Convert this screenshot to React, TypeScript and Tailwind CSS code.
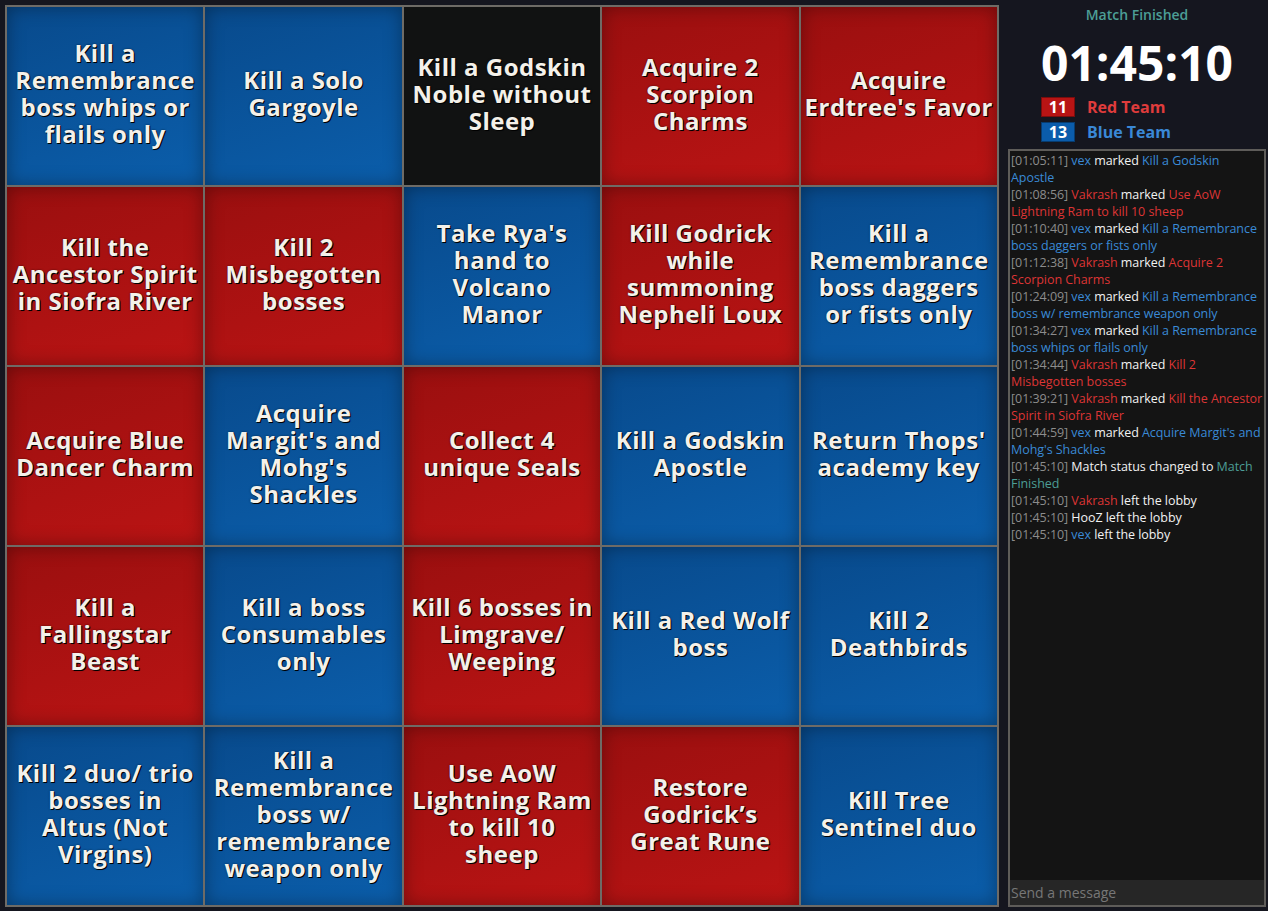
import React from "react";

type Team = "red" | "blue" | "none";

interface Goal {
  lines: string[];
  team: Team;
}

const goals: Goal[] = [
  { lines: ["Kill a", "Remembrance", "boss whips or", "flails only"], team: "blue" },
  { lines: ["Kill a Solo", "Gargoyle"], team: "blue" },
  { lines: ["Kill a Godskin", "Noble without", "Sleep"], team: "none" },
  { lines: ["Acquire 2", "Scorpion", "Charms"], team: "red" },
  { lines: ["Acquire", "Erdtree's Favor"], team: "red" },

  { lines: ["Kill the", "Ancestor Spirit", "in Siofra River"], team: "red" },
  { lines: ["Kill 2", "Misbegotten", "bosses"], team: "red" },
  { lines: ["Take Rya's", "hand to", "Volcano", "Manor"], team: "blue" },
  { lines: ["Kill Godrick", "while", "summoning", "Nepheli Loux"], team: "red" },
  { lines: ["Kill a", "Remembrance", "boss daggers", "or fists only"], team: "blue" },

  { lines: ["Acquire Blue", "Dancer Charm"], team: "red" },
  { lines: ["Acquire", "Margit's and", "Mohg's", "Shackles"], team: "blue" },
  { lines: ["Collect 4", "unique Seals"], team: "red" },
  { lines: ["Kill a Godskin", "Apostle"], team: "blue" },
  { lines: ["Return Thops'", "academy key"], team: "blue" },

  { lines: ["Kill a", "Fallingstar", "Beast"], team: "red" },
  { lines: ["Kill a boss", "Consumables", "only"], team: "blue" },
  { lines: ["Kill 6 bosses in", "Limgrave/", "Weeping"], team: "red" },
  { lines: ["Kill a Red Wolf", "boss"], team: "blue" },
  { lines: ["Kill 2", "Deathbirds"], team: "blue" },

  { lines: ["Kill 2 duo/ trio", "bosses in", "Altus (Not", "Virgins)"], team: "blue" },
  { lines: ["Kill a", "Remembrance", "boss w/", "remembrance", "weapon only"], team: "blue" },
  { lines: ["Use AoW", "Lightning Ram", "to kill 10", "sheep"], team: "red" },
  { lines: ["Restore", "Godrick\u2019s", "Great Rune"], team: "red" },
  { lines: ["Kill Tree", "Sentinel duo"], team: "blue" },
];

const cellTone: Record<Team, string> = {
  blue: "bg-[linear-gradient(160deg,#084a8c,#0b5eab)] shadow-[inset_0_0_18px_rgba(0,0,0,0.35)]",
  red: "bg-[linear-gradient(160deg,#9a0f0f,#bb1414)] shadow-[inset_0_0_18px_rgba(0,0,0,0.35)]",
  none: "bg-[#111212]",
};

type Seg = { text: string; c: "ts" | "w" | "b" | "r" | "t" };

const segColor = {
  ts: "text-[#8c8c8c]",
  w: "text-[#f2f2f2]",
  b: "text-[#3a8ad6]",
  r: "text-[#dd3535]",
  t: "text-[#4c9e96]",
};

const log: Seg[][] = [
  [{ text: "[01:05:11] ", c: "ts" }, { text: "vex", c: "b" }, { text: " marked ", c: "w" }, { text: "Kill a Godskin Apostle", c: "b" }],
  [{ text: "[01:08:56] ", c: "ts" }, { text: "Vakrash", c: "r" }, { text: " marked ", c: "w" }, { text: "Use AoW Lightning Ram to kill 10 sheep", c: "r" }],
  [{ text: "[01:10:40] ", c: "ts" }, { text: "vex", c: "b" }, { text: " marked ", c: "w" }, { text: "Kill a Remembrance boss daggers or fists only", c: "b" }],
  [{ text: "[01:12:38] ", c: "ts" }, { text: "Vakrash", c: "r" }, { text: " marked ", c: "w" }, { text: "Acquire 2 Scorpion Charms", c: "r" }],
  [{ text: "[01:24:09] ", c: "ts" }, { text: "vex", c: "b" }, { text: " marked ", c: "w" }, { text: "Kill a Remembrance boss w/ remembrance weapon only", c: "b" }],
  [{ text: "[01:34:27] ", c: "ts" }, { text: "vex", c: "b" }, { text: " marked ", c: "w" }, { text: "Kill a Remembrance boss whips or flails only", c: "b" }],
  [{ text: "[01:34:44] ", c: "ts" }, { text: "Vakrash", c: "r" }, { text: " marked ", c: "w" }, { text: "Kill 2 Misbegotten bosses", c: "r" }],
  [{ text: "[01:39:21] ", c: "ts" }, { text: "Vakrash", c: "r" }, { text: " marked ", c: "w" }, { text: "Kill the Ancestor Spirit in Siofra River", c: "r" }],
  [{ text: "[01:44:59] ", c: "ts" }, { text: "vex", c: "b" }, { text: " marked ", c: "w" }, { text: "Acquire Margit's and Mohg's Shackles", c: "b" }],
  [{ text: "[01:45:10] ", c: "ts" }, { text: "Match status changed to ", c: "w" }, { text: "Match Finished", c: "t" }],
  [{ text: "[01:45:10] ", c: "ts" }, { text: "Vakrash", c: "r" }, { text: " left the lobby", c: "w" }],
  [{ text: "[01:45:10] ", c: "ts" }, { text: "HooZ left the lobby", c: "w" }],
  [{ text: "[01:45:10] ", c: "ts" }, { text: "vex", c: "b" }, { text: " left the lobby", c: "w" }],
];

const Board = () => (
  <div className="grid h-[902px] w-[994px] shrink-0 grid-cols-5 grid-rows-5 gap-[2px] bg-[#6e6b66] p-[2px]">
    {goals.map((g, i) => (
      <div
        key={i}
        className={`flex flex-col items-center justify-center pb-[6px] text-center ${cellTone[g.team]}`}
      >
        {g.lines.map((l) => (
          <span
            key={l}
            className="whitespace-nowrap font-['Open_Sans',sans-serif] text-[24px] font-bold leading-[27px] tracking-[0.5px] text-[#f4f1ea] [text-shadow:1px_1px_0_#000,0_0_2px_rgba(0,0,0,0.6)]"
          >
            {l}
          </span>
        ))}
      </div>
    ))}
  </div>
);

const ScoreRow = ({ n, name, red }: { n: number; name: string; red?: boolean }) => (
  <div className="flex h-[20px] items-center gap-[12px]">
    <span
      className={`flex h-[20px] w-[34px] items-center justify-center border font-['Open_Sans',sans-serif] text-[16px] font-bold leading-none text-white ${
        red ? "border-[#7a0d0d] bg-[#b81414]" : "border-[#073c70] bg-[#0b5cab]"
      }`}
    >
      {n}
    </span>
    <span
      className={`font-['Open_Sans',sans-serif] text-[16px] font-bold leading-none ${
        red ? "text-[#e03c3c]" : "text-[#3a88d6]"
      }`}
    >
      {name}
    </span>
  </div>
);

const Sidebar = () => (
  <div className="flex h-[906px] flex-1 flex-col pb-[4px] pl-[9px] pr-[2px]">
    <div className="text-center font-['Open_Sans',sans-serif] text-[14px] font-semibold leading-[19px] text-[#4c9e96]">
      Match Finished
    </div>
    <div className="mt-[14px] text-center font-['Open_Sans',sans-serif] text-[48px] font-bold leading-[50px] text-white">
      01:45:10
    </div>
    <div className="mt-[9px] flex flex-col gap-[5px] pl-[33px]">
      <ScoreRow n={11} name="Red Team" red />
      <ScoreRow n={13} name="Blue Team" />
    </div>
    <div className="mt-[7px] flex min-h-0 flex-1 flex-col border-2 border-[#5e5c59] bg-[#141414]">
      <div className="flex-1 pl-[1px] pt-[1px] font-['Open_Sans',sans-serif] text-[12.5px] leading-[17px] tracking-[-0.05px]">
        {log.map((m, i) => (
          <p key={i}>
            {m.map((s, j) => (
              <span key={j} className={segColor[s.c]}>
                {s.text}
              </span>
            ))}
          </p>
        ))}
      </div>
      <input
        placeholder="Send a message"
        className="h-[25px] w-full bg-[#262626] px-[1px] font-['Open_Sans',sans-serif] text-[14px] text-white outline-none placeholder:text-[#777]"
      />
    </div>
  </div>
);

export default function App() {
  return (
    <div className="flex h-[911px] w-[1268px] bg-[#15161f] pl-[5px] pt-[5px]">
      <Board />
      <Sidebar />
    </div>
  );
}
